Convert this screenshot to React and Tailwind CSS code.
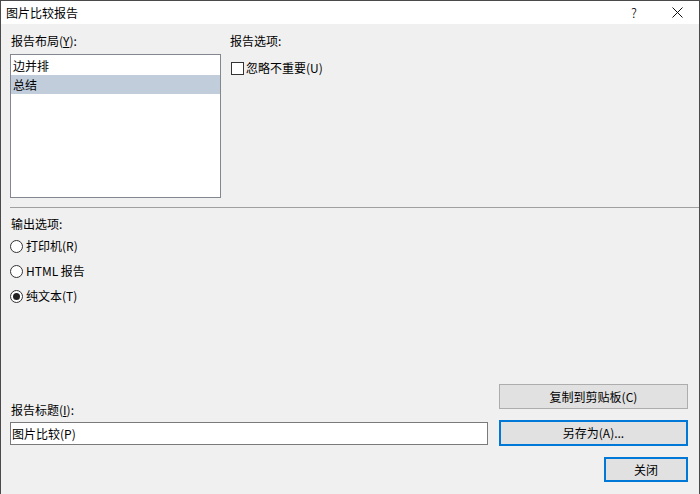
import React from 'react'

const font = { fontFamily: '"Microsoft YaHei", "Noto Sans CJK SC", "Noto Sans", sans-serif' }

const Radio = ({ label, checked }) => (
  <div className="flex items-center h-[16px] pl-[9px]">
    <span className="w-[13px] h-[13px] rounded-full border border-[#333] bg-white flex items-center justify-center">
      {checked && <span className="w-[7px] h-[7px] rounded-full bg-[#222]"></span>}
    </span>
    <span className="ml-[3px]">{label}</span>
  </div>
)

const Button = ({ children, focused, className = '' }) => (
  <button
    className={`bg-[#e1e1e1] flex items-center justify-center text-[12px] text-black ${
      focused ? 'border-2 border-[#0078d7]' : 'border border-[#adadad]'
    } ${className}`}
  >
    {children}
  </button>
)

export default function App() {
  return (
    <div
      style={font}
      className="relative w-[700px] h-[494px] flex flex-col bg-[#f0f0f0] text-[12px] leading-[16px] text-black shadow-[inset_1px_0_0_#4a4a4a,inset_-1px_0_0_#4a4a4a,inset_0_1px_0_#4a4a4a] overflow-hidden"
    >
      {/* Title bar */}
      <div className="h-[24px] bg-white flex items-center pl-[5px] border-l border-r border-t border-[#4a4a4a]">
        <span className="flex-1">图片比较报告</span>
        <span className="w-[20px] text-center text-[13px] font-light mr-[28px]">?</span>
        <svg className="mr-[16px]" width="11" height="11" viewBox="0 0 11 11">
          <path d="M0.5 0.5L10.5 10.5M10.5 0.5L0.5 10.5" stroke="#111" strokeWidth="1" fill="none" />
        </svg>
      </div>

      {/* Body */}
      <div className="flex-1 flex flex-col pt-[9px] border-l border-r border-[#4a4a4a]">
        <div className="flex">
          <div className="flex flex-col ml-[9px] w-[211px]">
            <span className="pl-[1px]">
              报告布局(<span className="underline">Y</span>):
            </span>
            <div className="mt-[5px] h-[144px] bg-white border border-[#828790] pt-[1px]">
              <div className="h-[19px] flex items-center pl-[2px]">边并排</div>
              <div className="h-[19px] flex items-center pl-[2px] bg-[#c1cddb]">总结</div>
            </div>
          </div>
          <div className="flex flex-col ml-[9px]">
            <span>报告选项:</span>
            <div className="flex items-center mt-[11px] pl-[1px]">
              <span className="w-[13px] h-[13px] border border-[#333] bg-white"></span>
              <span className="ml-[2px]">忽略不重要(U)</span>
            </div>
          </div>
        </div>

        <div className="mt-[9px] ml-[9px] h-px bg-[#a0a0a0]"></div>

        <span className="mt-[8px] pl-[10px]">输出选项:</span>
        <div className="flex flex-col gap-[9px] mt-[6px]">
          <Radio label="打印机(R)" />
          <Radio label="HTML 报告" />
          <Radio label="纯文本(T)" checked />
        </div>

        {/* Bottom area */}
        <div className="mt-auto flex flex-col pb-[12px]">
          <div className="flex items-end">
            <div className="flex-1 flex flex-col ml-[9px] mb-[1px]">
              <span className="pl-[1px]">
                报告标题(<span className="underline">I</span>):
              </span>
              <div className="mt-[4px] h-[23px] bg-white border border-[#7a7a7a] flex items-center pl-[1px]">
                图片比较(P)
              </div>
            </div>
            <div className="flex flex-col ml-[11px] mr-[11px] w-[189px]">
              <Button className="h-[25px]">复制到剪贴板(C)</Button>
              <Button focused className="h-[26px] mt-[11px]">另存为(A)...</Button>
            </div>
          </div>
          <div className="flex justify-end mt-[11px] mr-[11px]">
            <Button focused className="w-[84px] h-[25px]">关闭</Button>
          </div>
        </div>
      </div>
    </div>
  )
}
